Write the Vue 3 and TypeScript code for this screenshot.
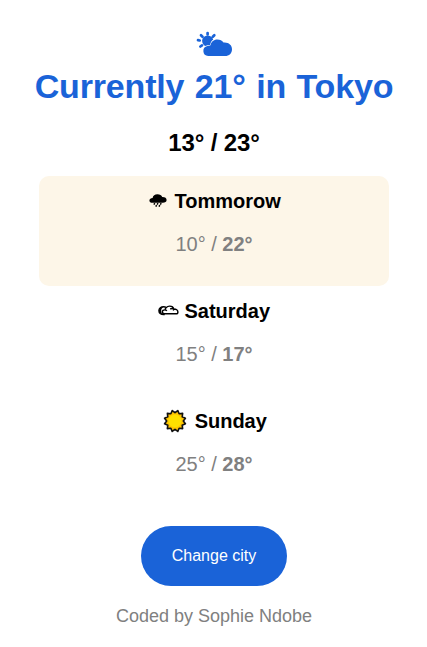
<script setup lang="ts">
interface Forecast {
  day: string
  icon: 'rain' | 'cloud' | 'sun'
  low: number
  high: number
}

const city = 'Tokyo'
const current = 21
const days: Forecast[] = [
  { day: 'Tommorow', icon: 'rain', low: 10, high: 22 },
  { day: 'Saturday', icon: 'cloud', low: 15, high: 17 },
  { day: 'Sunday', icon: 'sun', low: 25, high: 28 },
]

// Star outline of the sun: twelve points alternating between two radii.
const sunPoints = Array.from({ length: 24 }, (_, i) => {
  const r = i % 2 === 0 ? 10.8 : 8.3
  const a = (i * Math.PI) / 12 + Math.PI / 12
  return `${(12 + r * Math.cos(a)).toFixed(2)},${(12 + r * Math.sin(a)).toFixed(2)}`
}).join(' ')
</script>

<template>
  <main class="weather">
    <svg class="hero" viewBox="0 0 35 26" aria-hidden="true">
      <path class="ray" d="M11.6 2v1.4M5 4.2l1.5 1.5M18.3 4.2l-1.5 1.5M2 9.2l1.7.3M4.4 15.5l1.6-1.1" />
      <circle class="blue" cx="11.7" cy="10" r="5.6" />
      <path class="cloud-front" d="M12.2 25A5.1 5.1 0 0 1 11.5 14.9C12.5 15 13.5 14.9 14.5 14.3C15 10.8 17.8 8.4 21.3 8.4C24.1 8.4 26.2 9.5 27.5 11.5C32.2 10.9 36 13.8 36 18.2C36 22.2 33.2 25 29 25Z" />
    </svg>
    <h1>Currently {{ current }}° in {{ city }}</h1>
    <h2>13° / 23°</h2>
    <section v-for="(item, index) in days" :key="item.day" class="day" :class="{ active: index === 0 }">
      <h3>
        <svg v-if="item.icon === 'rain'" class="icon rain" viewBox="0 0 22 16" aria-hidden="true">
          <path d="M5.6 9.8C3.5 9.8 2.4 8.9 2.4 7.5C2.4 6 3.8 5 5.6 4.9C6.1 2.6 7.8 1.3 10.4 1.3C12.8 1.3 14.6 2.3 15.2 4.1C18 4 19.6 5.3 19.6 7C19.6 8.7 18.1 9.8 15.8 9.8Z" />
          <path d="M7.8 10.2l-.9 1.4M11 10.2l-.9 1.4M14.2 10.2l-.9 1.4M9.6 12.2l-.8 1.5M12.8 12.2l-.8 1.5" stroke="#000" stroke-width="1.5" />
        </svg>
        <svg v-else-if="item.icon === 'cloud'" class="icon cloud" viewBox="0 0 21 16" aria-hidden="true">
          <path d="M6.7 11.6C3 12 .9 10.2.9 7.7C.9 5.2 3.1 3.7 5.5 3.7C6.7 3.7 7.6 4 8.3 4.5C9.2 3.5 10.4 3.1 11.7 3.1C14 3.1 15.4 4.2 15.9 6C18.1 5.9 19.9 7.1 19.9 8.9C19.9 10.1 19.3 10.8 18.2 10.8H6.5C5.3 10.8 4.4 10 4.4 8.8C4.4 7.6 5.4 6.9 6.7 6.9C7.7 6.9 8.4 7.2 8.8 7.9M8.3 4.5C7.5 5.3 7 6 7 6.9M12.2 6C13.2 5.5 14.7 5.4 15.9 6.1L15.3 7.5" fill="none" stroke="#000" stroke-width="1.4" />
          <path d="M1 7.5C1.2 4.8 3.5 3.8 5.5 4.1C3.9 5 3.1 6.3 3.2 8.3C3.3 9.9 4 11 5 11.7C2.4 11.3.8 9.8 1 7.5Z" />
        </svg>
        <svg v-else class="icon sun" viewBox="0 0 24 24" aria-hidden="true">
          <polygon :points="sunPoints" fill="#ffc400" stroke="#111" stroke-width="1.6" stroke-linejoin="round" />
          <circle cx="12" cy="12" r="6.5" fill="#ffe000" />
        </svg>
        <span>{{ item.day }}</span>
      </h3>
      <p>{{ item.low }}° / <strong>{{ item.high }}°</strong></p>
    </section>
    <button type="button">Change city</button>
    <footer>Coded by Sophie Ndobe</footer>
  </main>
</template>

<style>
body {
  background: #fff;
}
</style>

<style scoped>
.weather {
  display: flex;
  flex-direction: column;
  align-items: center;
  height: 647px;
  box-sizing: border-box;
  padding-top: 31px;
  font-family: "Liberation Sans", Arial, sans-serif;
  color: #000;
}
.hero {
  display: block;
  width: 35px;
  height: 26px;
  overflow: visible;
}
.blue {
  fill: #1a63d8;
}
.ray {
  fill: none;
  stroke: #1a63d8;
  stroke-width: 2.7;
  stroke-linecap: round;
}
.cloud-front {
  fill: #1a63d8;
  stroke: #fff;
  stroke-width: 1.2;
  paint-order: stroke;
}
h1 {
  margin: 9px 0 0;
  padding-left: 1px;
  color: #1a63d8;
  font-size: 34px;
  line-height: 40px;
  letter-spacing: -0.17px;
  word-spacing: 1.2px;
  white-space: nowrap;
}
h2 {
  margin: 23px 0 19px;
  padding-left: 1px;
  font-size: 24px;
  line-height: 28px;
  letter-spacing: -0.1px;
}
.day {
  box-sizing: border-box;
  width: 350px;
  height: 110px;
  padding-top: 13px;
  border-radius: 10px;
  text-align: center;
}
.active {
  background: #fdf6e8;
}
h3 {
  display: flex;
  align-items: center;
  justify-content: center;
  gap: 5.5px;
  height: 24px;
  margin: 0;
  padding-left: 1px;
  font-size: 20px;
  line-height: 24px;
}
.icon {
  flex: none;
}
.rain {
  width: 22px;
  height: 16px;
}
.cloud {
  width: 21px;
  height: 16px;
}
.sun {
  width: 24px;
  height: 24px;
  margin: 0 2px;
}
p {
  margin: 19px 0 0;
  padding-left: 1px;
  color: #808080;
  font-size: 20px;
  line-height: 24px;
}
button {
  width: 146px;
  height: 60px;
  margin-top: 20px;
  padding: 0 0 0 1px;
  border: 0;
  border-radius: 30px;
  background: #1a63d8;
  color: #fff;
  font: 16px "Liberation Sans", Arial, sans-serif;
}
footer {
  margin-top: 19px;
  padding-left: 1px;
  color: #808080;
  font-size: 18px;
  line-height: 22px;
}
</style>
